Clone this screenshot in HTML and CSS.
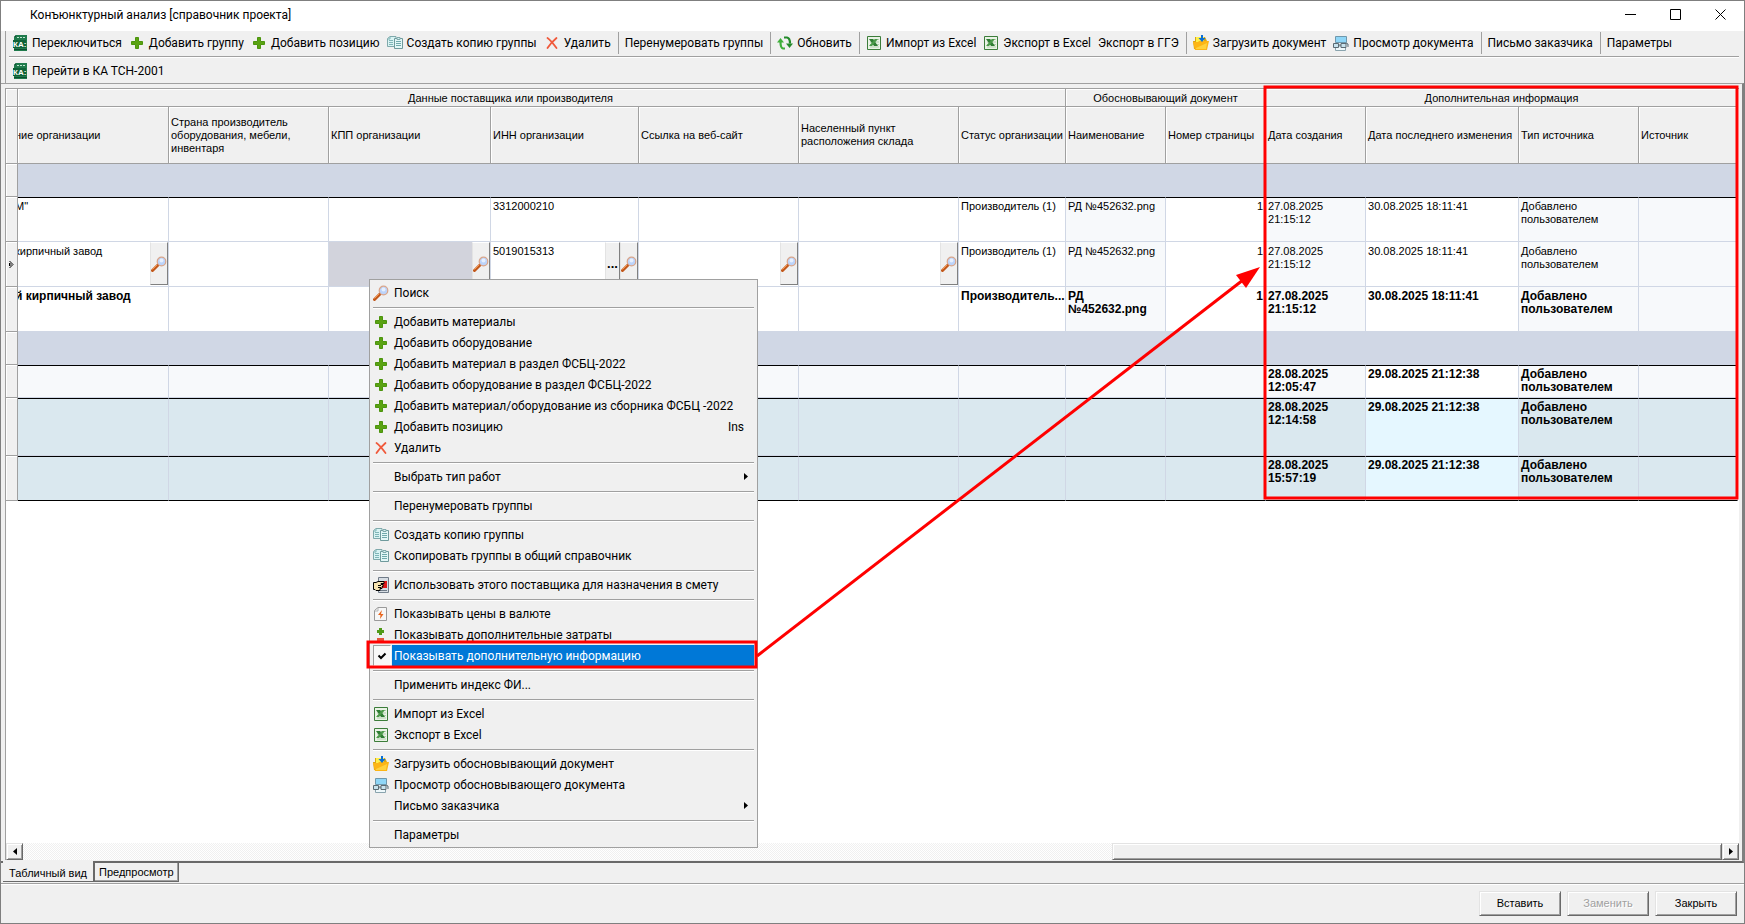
FILE: index.html
```html
<!DOCTYPE html>
<html lang="ru">
<head>
<meta charset="utf-8">
<title>Конъюнктурный анализ [справочник проекта]</title>
<link rel="stylesheet" href="styles.css">
</head>
<body>
<svg class="sprite" aria-hidden="true">
  <symbol id="ka" viewBox="0 0 16 16">
    <path d="M4 0h11v16H2V2z" fill="#1f7a4c"/><path d="M4 0v2H2z" fill="#0d4f30"/>
    <path d="M5 2.500h2m1 0h2m1 0h2" stroke="#bfe6cf"/><path d="M1 5h13v8H1z" fill="#0f6238"/>
    <path d="M2 14.500h13" stroke="#0d4f30"/>
    <text x="1" y="12" font-family="Liberation Sans" font-size="8" font-weight="bold" fill="#fff">КА:</text>
  </symbol>
  <symbol id="plus" viewBox="0 0 16 16"><path d="M6.500 2.500h3v4h4v3h-4v4h-3v-4h-4v-3h4z" fill="#5aa312" stroke="#4c940e"/></symbol>
  <symbol id="copy" viewBox="0 0 16 16">
    <path d="M.5 3.500 3 1.500h6v10H.5z" fill="#d9f3f3" stroke="#7fa9ab"/><path d="M2 5.500h4m-4 2h4m-4 2h4M3 2v2H1" stroke="#7fb5b7" fill="none"/>
    <path d="M7.500 3.500h8v10h-8z" fill="#e3f7f7" stroke="#6f9a9c"/><path d="M9 6.500h5m-5 2h5m-5 2h5" stroke="#6fa9ab"/><path d="M10 2.500h3v2h-3z" fill="#d9f3f3" stroke="#7fa9ab"/>
  </symbol>
  <symbol id="del" viewBox="0 0 16 16"><path d="M3.500 3c3 2 6 6 9 10M12.500 3C9 6 6 9 3.500 13" fill="none" stroke="#f0593b" stroke-width="1.800" stroke-linecap="round"/></symbol>
  <symbol id="refresh" viewBox="0 0 16 16">
    <path d="M8 13.500H6Q3.500 13 3.500 7" fill="none" stroke="#3fae3a" stroke-width="2.200"/><path d="M0 7.500 3.500 3 7 7.500z" fill="#3fae3a"/>
    <path d="M7 2.500h3q3 .5 3 6" fill="none" stroke="#238a2a" stroke-width="2.200"/><path d="M9 8.500h7L12.500 13z" fill="#238a2a"/>
  </symbol>
  <symbol id="excel" viewBox="0 0 16 16">
    <path d="M1.500 1.500h13v13h-13z" fill="#eaf3e6" stroke="#3c7d3a"/><path d="M4 4.500h9M4 7h9m-9 2.500h9M4 12h9" stroke="#b3cfae"/>
    <path d="M3 4h4l5 7H8z" fill="#2e7d32"/><path d="M12 4H9l-6 7h3z" fill="#4c9a4a"/>
  </symbol>
  <symbol id="folder" viewBox="0 0 16 16">
    <path d="M0 6h2V2h10l2 4v8H1z" fill="#d9a514"/><path d="M3 2h8v5H3z" fill="#fff04a"/>
    <path d="M0 7h5l1-1h10l-2 9H2z" fill="#fdb515"/><path d="M3 13 14 8l-1 6H3z" fill="#ffd23c"/>
    <path d="M8 0h2v3h2.500L9 7 5.500 3H8z" fill="#0b6fd6"/>
  </symbol>
  <symbol id="view" viewBox="0 0 16 16">
    <path d="M2.500 1.500h11v6h-11z" fill="#8fd6f7" stroke="#6f98ac"/><path d="M2.500 11h10v4.500h-10z" fill="#eef8fb" stroke="#8aa4ae"/>
    <path d="M.5 8.500h5v4h-5zM8 8.500h5v4H8zM5.500 10H8m5-2 2 1v3" fill="#c8e3ee" stroke="#5c6b73"/>
  </symbol>
  <symbol id="search" viewBox="0 0 16 16">
    <path d="M7 9 1.500 14.500" stroke="#c2571a" stroke-width="3" stroke-linecap="round"/><path d="M6 9 1.500 13.500" stroke="#f59a52"/>
    <circle cx="10.500" cy="5.500" r="4.300" fill="#bcd3fa" stroke="#d9a58a" stroke-width="1.200"/><circle cx="10.500" cy="4.500" r="2" fill="#e6effe"/>
  </symbol>
  <symbol id="hand" viewBox="0 0 16 16">
    <path d="M5.500.5h10v15h-10z" fill="#d7dde3" stroke="#707b88"/><path d="M8 4h6v7H8z" fill="#e01818"/><path d="M7 13.500h7" stroke="#707b88"/>
    <path d="M.5 5.500H3l2-1h6v2H8v1h2v2H9v2H7v2H3l-1-1H.5z" fill="#f7e3b0" stroke="#000"/><path d="M5 8.500h3m-3 2h3" stroke="#000"/>
  </symbol>
  <symbol id="price" viewBox="0 0 16 16"><path d="M1.500 4.500 5 1.500h8.500v13h-12z" fill="#f7f7f7" stroke="#9a9a9a"/><path d="M5 2v3H2" fill="none" stroke="#b5b5b5"/><path d="M9 4 5 9h2.500L7 13l3.500-5H8z" fill="#e8641b"/></symbol>
  <symbol id="pm" viewBox="0 0 16 16"><path d="M6 1h3v2h2v3H9v2H6V6H4V3h2z" fill="#4f9a17"/><path d="M4 11h7v3H4z" fill="#e2553c"/></symbol>
</svg>

<div class="window">
  <header class="titlebar">
    <h1>Конъюнктурный анализ [справочник проекта]</h1>
    <div class="winctl">
      <button aria-label="Свернуть"><svg viewBox="0 0 11 11"><path d="M0 5.500h11"/></svg></button>
      <button aria-label="Развернуть"><svg viewBox="0 0 11 11"><path d="M.5.5h10v10H.5z"/></svg></button>
      <button aria-label="Закрыть окно"><svg viewBox="0 0 11 11"><path d="m.5.5 10 10m0-10-10 10"/></svg></button>
    </div>
  </header>

  <div class="toolbars">
    <div class="toolbar">
      <button><svg><use href="#ka"/></svg>Переключиться</button>
      <button><svg><use href="#plus"/></svg>Добавить группу</button>
      <button><svg><use href="#plus"/></svg>Добавить позицию</button>
      <button><svg><use href="#copy"/></svg>Создать копию группы</button>
      <button><svg><use href="#del"/></svg>Удалить</button>
      <i></i>
      <button>Перенумеровать группы</button>
      <i></i>
      <button><svg><use href="#refresh"/></svg>Обновить</button>
      <i></i>
      <button><svg><use href="#excel"/></svg>Импорт из Excel</button>
      <button><svg><use href="#excel"/></svg>Экспорт в Excel</button>
      <button>Экспорт в ГГЭ</button>
      <i></i>
      <button><svg><use href="#folder"/></svg>Загрузить документ</button>
      <button><svg><use href="#view"/></svg>Просмотр документа</button>
      <i></i>
      <button>Письмо заказчика</button>
      <i></i>
      <button>Параметры</button>
    </div>
    <div class="toolbar">
      <button><svg><use href="#ka"/></svg>Перейти в КА ТСН-2001</button>
    </div>
  </div>

  <main class="page">
    <div class="grid">
      <table>
        <colgroup><col class="w12"><col class="w151"><col class="w160"><col class="w162"><col class="w148"><col class="w160"><col class="w160"><col class="w107"><col class="w100"><col class="w100"><col class="w100"><col class="w153"><col class="w120"><col></colgroup>
        <thead>
          <tr class="bands"><th class="ind"></th><th colspan="7" class="supplier">Данные поставщика или производителя</th><th colspan="2">Обосновывающий документ</th><th colspan="4">Дополнительная информация</th></tr>
          <tr class="heads"><th class="ind"></th><th><span class="cut">ние организации</span></th><th>Страна производитель<br>оборудования, мебели,<br>инвентаря</th><th>КПП организации</th><th>ИНН организации</th><th>Ссылка на веб-сайт</th><th>Населенный пункт<br>расположения склада</th><th>Статус организации</th><th>Наименование</th><th>Номер страницы</th><th>Дата создания</th><th>Дата последнего изменения</th><th>Тип источника</th><th>Источник</th></tr>
        </thead>
        <tbody>
          <tr class="group"><td class="ind"></td><td colspan="13"></td></tr>
          <tr class="item ruled"><td class="ind"></td><td><span class="cut">М"</span></td><td></td><td></td><td>3312000210</td><td></td><td></td><td>Производитель (1)</td><td class="ro">РД №452632.png</td><td class="num">1</td><td class="ro">27.08.2025<br>21:15:12</td><td>30.08.2025 18:11:41</td><td class="ro">Добавлено<br>пользователем</td><td class="ro"></td></tr>
          <tr class="item"><td class="ind"><svg class="cursor" viewBox="0 0 6 9"><path d="M1.500 1 5 4.500 1.500 8M1.500 3v3L3 4.500z"/></svg></td>
            <td class="edit"><div><span class="cut">кирпичный завод</span><button aria-label="Поиск"><svg><use href="#search"/></svg></button></div></td><td></td>
            <td class="edit current"><div><span></span><button aria-label="Поиск"><svg><use href="#search"/></svg></button></div></td>
            <td class="edit"><div><span>5019015313</span><button class="dots" aria-label="Выбрать">...</button><button aria-label="Поиск"><svg><use href="#search"/></svg></button></div></td>
            <td class="edit"><div><span></span><button aria-label="Поиск"><svg><use href="#search"/></svg></button></div></td>
            <td class="edit"><div><span></span><button aria-label="Поиск"><svg><use href="#search"/></svg></button></div></td>
            <td>Производитель (1)</td><td class="ro">РД №452632.png</td><td class="num">1</td><td class="ro">27.08.2025<br>21:15:12</td><td>30.08.2025 18:11:41</td><td class="ro">Добавлено<br>пользователем</td><td class="ro"></td></tr>
          <tr class="item strong"><td class="ind"></td><td><span class="cut">й кирпичный завод</span></td><td></td><td></td><td></td><td></td><td></td><td>Производитель...</td><td class="ro">РД<br>№452632.png</td><td class="num">1</td><td class="ro">27.08.2025<br>21:15:12</td><td>30.08.2025 18:11:41</td><td class="ro">Добавлено<br>пользователем</td><td class="ro"></td></tr>
          <tr class="group"><td class="ind"></td><td colspan="13"></td></tr>
          <tr class="short ruled strong locked"><td class="ind"></td><td></td><td></td><td></td><td></td><td></td><td></td><td></td><td></td><td></td><td>28.08.2025<br>12:05:47</td><td class="changed">29.08.2025 21:12:38</td><td>Добавлено<br>пользователем</td><td></td></tr>
          <tr class="tall ruled strong blue"><td class="ind"></td><td></td><td></td><td></td><td></td><td></td><td></td><td></td><td></td><td></td><td>28.08.2025<br>12:14:58</td><td class="changed">29.08.2025 21:12:38</td><td>Добавлено<br>пользователем</td><td></td></tr>
          <tr class="item ruled strong blue last"><td class="ind"></td><td></td><td></td><td></td><td></td><td></td><td></td><td></td><td></td><td></td><td>28.08.2025<br>15:57:19</td><td class="changed">29.08.2025 21:12:38</td><td>Добавлено<br>пользователем</td><td></td></tr>
        </tbody>
      </table>
      <div class="hscroll">
        <button aria-label="Влево"><svg viewBox="0 0 4 7"><path d="M4 0v7L0 3.500z"/></svg></button>
        <span class="thumb"></span>
        <button aria-label="Вправо"><svg viewBox="0 0 4 7"><path d="M0 0v7l4-3.500z"/></svg></button>
      </div>
    </div>
  </main>
  <nav class="tabs"><button class="on">Табличный вид</button><button>Предпросмотр</button></nav>
  <footer class="actions"><button>Вставить</button><button disabled>Заменить</button><button>Закрыть</button></footer>

  <div class="menu">
    <button><svg><use href="#search"/></svg>Поиск</button>
    <hr>
    <button><svg><use href="#plus"/></svg>Добавить материалы</button>
    <button><svg><use href="#plus"/></svg>Добавить оборудование</button>
    <button><svg><use href="#plus"/></svg>Добавить материал в раздел ФСБЦ-2022</button>
    <button><svg><use href="#plus"/></svg>Добавить оборудование в раздел ФСБЦ-2022</button>
    <button><svg><use href="#plus"/></svg>Добавить материал/оборудование из сборника ФСБЦ -2022</button>
    <button><svg><use href="#plus"/></svg>Добавить позицию<kbd>Ins</kbd></button>
    <button><svg><use href="#del"/></svg>Удалить</button>
    <hr>
    <button><svg></svg>Выбрать тип работ<svg class="sub" viewBox="0 0 4 7"><path d="M0 0v7l4-3.500z"/></svg></button>
    <hr>
    <button><svg></svg>Перенумеровать группы</button>
    <hr>
    <button><svg><use href="#copy"/></svg>Создать копию группы</button>
    <button><svg><use href="#copy"/></svg>Скопировать группы в общий справочник</button>
    <hr>
    <button><svg><use href="#hand"/></svg>Использовать этого поставщика для назначения в смету</button>
    <hr>
    <button><svg><use href="#price"/></svg>Показывать цены в валюте</button>
    <button><svg><use href="#pm"/></svg>Показывать дополнительные затраты</button>
    <button class="checked"><svg viewBox="0 0 16 16"><path d="m4.500 8 2.500 2.500 4.500-4.500" fill="none" stroke="#000" stroke-width="2"/></svg><span>Показывать дополнительную информацию</span></button>
    <hr>
    <button><svg></svg>Применить индекс ФИ...</button>
    <hr>
    <button><svg><use href="#excel"/></svg>Импорт из Excel</button>
    <button><svg><use href="#excel"/></svg>Экспорт в Excel</button>
    <hr>
    <button><svg><use href="#folder"/></svg>Загрузить обосновывающий документ</button>
    <button><svg><use href="#view"/></svg>Просмотр обосновывающего документа</button>
    <button><svg></svg>Письмо заказчика<svg class="sub" viewBox="0 0 4 7"><path d="M0 0v7l4-3.500z"/></svg></button>
    <hr>
    <button><svg></svg>Параметры</button>
  </div>

  <svg class="marks" width="1745" height="924" viewBox="0 0 1745 924" aria-hidden="true">
    <rect x="1265" y="87" width="472" height="411"/>
    <rect x="368" y="642" width="388" height="25"/>
    <path d="M757 656 1243 280"/>
    <path class="tip" d="M1260 267 1236 275 1246 288z"/>
  </svg>
</div>
</body>
</html>
```

FILE: styles.css
```css
* { box-sizing: border-box; }

body {
  margin: 0;
  background: #f0f0f0;
  color: #000;
  font: 11px/13px "Liberation Sans", Arial, sans-serif;
}

button {
  margin: 0;
  padding: 0;
  border: 0;
  background: none;
  color: inherit;
  font: inherit;
  white-space: nowrap;
}

svg { flex: none; display: block; width: 16px; height: 16px; }
.sprite { position: absolute; width: 0; height: 0; }

.window {
  position: relative;
  display: flex;
  flex-direction: column;
  min-height: 100vh;
  border: 1px solid #7f7f7f;
}

.titlebar, .toolbar, .menu { font: 12px/16px Roboto, "Open Sans", sans-serif; }

/* Title bar */
.titlebar {
  display: flex;
  align-items: center;
  justify-content: space-between;
  height: 30px;
  padding: 0 1px 3px 29px;
  background: #fff;
}
.titlebar h1 { margin: 0; font: inherit; }
.winctl { display: flex; }
.winctl button { display: flex; justify-content: center; width: 45px; }
.winctl svg { width: 11px; height: 11px; fill: none; stroke: #000; }

/* Toolbars */
.toolbars {
  margin: 0 5px 0 4px;
  border-left: 1px solid #a0a0a0;
  padding-left: 3px;
}
.toolbar { display: flex; align-items: center; height: 25px; padding-bottom: 2px; }
.toolbar + .toolbar { height: 27px; padding: 2px 0 0; border-top: 1px solid #a0a0a0; box-shadow: inset 0 1px #fff; }
.toolbar button { display: flex; flex: none; align-items: center; gap: 4px; padding: 0 4px 0 3px; }
.toolbar i { flex: none; width: 1px; height: 22px; margin: 0 3px; background: #a0a0a0; }

/* Tab page with the grid */
.page {
  flex: 1;
  display: flex;
  border-top: 1px solid #a0a0a0;
  padding: 4px 3px 1px 4px;
  border-right: 2px solid #808080;
  border-bottom: 2px solid #696969;
}
.grid {
  flex: 1;
  min-width: 0;
  display: flex;
  flex-direction: column;
  justify-content: space-between;
  border-top: 1px solid #a0a0a0;
  border-left: 1px solid #a0a0a0;
  background: #fff;
}
table { width: calc(100% - 1px); table-layout: fixed; border-collapse: separate; border-spacing: 0; }
.w12 { width: 12px; }
.w100 { width: 100px; }
.w107 { width: 107px; }
.w120 { width: 120px; }
.w148 { width: 148px; }
.w151 { width: 151px; }
.w153 { width: 153px; }
.w160 { width: 160px; }
.w162 { width: 162px; }

th, td { overflow: hidden; white-space: nowrap; text-align: left; }
th, .ind {
  border-right: 1px solid #a0a0a0;
  border-bottom: 1px solid #a0a0a0;
  background: #f0f0f0;
  box-shadow: inset 1px 1px #fff;
}
th { padding: 0 2px; font-weight: normal; vertical-align: middle; }
.bands th { height: 18px; padding-top: 2px; text-align: center; }
.bands .supplier { padding-right: 64px; }
.heads th { height: 57px; }
.cut { display: inline-block; margin-left: -5px; }

td {
  padding: 3px 2px 0;
  border-right: 1px solid #d0d7e5;
  border-bottom: 1px solid #d0d7e5;
  vertical-align: top;
}
.group td { height: 33px; }
.group td:not(.ind) { background: #d0d7e5; }
.item td { height: 45px; }
.short td { height: 33px; }
.tall td { height: 58px; }
.ruled td:not(.ind) { padding-top: 2px; border-top: 1px solid #000; }
.last td:not(.ind) { border-bottom-color: #000; }
.strong { font-size: 12px; font-weight: bold; }
.ro, .locked td:not(.ind) { background: #f7f9fb; }
.locked td.changed { background: #fff; }
.blue td:not(.ind) { background: #dae8ef; }
.blue td.changed { background: #e5f7ff; }
.num { text-align: right; }
td.ind { padding: 0; vertical-align: middle; }
.cursor { width: 6px; height: 9px; margin-left: 2px; fill: none; stroke: #000; }

td.edit { padding: 0; }
.edit div { display: flex; height: 44px; }
.edit span { flex: 1; padding: 3px 2px 0; }
.edit button {
  display: flex;
  align-items: center;
  justify-content: center;
  width: 18px;
  height: 43px;
  border: 1px solid;
  border-color: #fff #808080 #808080 #e3e3e3;
  background: #f0f0f0;
}
.edit .dots { width: 15px; font-size: 13px; font-weight: bold; }
.current { background: #d2d3dc; }

/* Scroll bar */
.hscroll {
  display: flex;
  justify-content: space-between;
  height: 17px;
  background: repeating-conic-gradient(#f0f0f0 0 25%, #fff 0 50%) 0 0 / 2px 2px;
}
.hscroll button, .thumb, .actions button {
  border: 1px solid;
  border-color: #e3e3e3 #696969 #696969 #e3e3e3;
  background: #f0f0f0;
  box-shadow: inset 1px 1px #fff, inset -1px -1px #a0a0a0;
}
.hscroll button { display: flex; align-items: center; justify-content: center; width: 17px; }
.hscroll svg { width: 4px; height: 7px; }
.thumb { width: 35.2%; margin-left: auto; }

/* Bottom tabs and buttons */
.tabs { display: flex; align-items: flex-start; height: 21px; padding-left: 2px; border-bottom: 1px solid #a0a0a0; }
.tabs button {
  height: 19px;
  padding: 0 4px;
  border: 1px solid #696969;
  border-top: 0;
  box-shadow: inset -1px -1px #a0a0a0;
}
.tabs .on { height: 21px; margin-top: -2px; padding: 5px 6px 0; border-left: 0; background: #f0f0f0; box-shadow: none; }
.actions {
  display: flex;
  justify-content: flex-end;
  gap: 6px;
  height: 39px;
  padding: 6px 7px 0 0;
  border-top: 1px solid #fff;
}
.actions button { width: 82px; height: 25px; }
.actions button:disabled { color: #a0a0a0; text-shadow: 1px 1px #fff; }

/* Context menu */
.menu {
  position: absolute;
  top: 278px;
  left: 368px;
  width: 389px;
  padding: 2px 3px;
  border: 1px solid #a0a0a0;
  background: #f0f0f0;
}
.menu button { display: flex; align-items: center; gap: 5px; width: 100%; height: 21px; text-align: left; }
.menu hr { height: 2px; margin: 4px 0 2px; border: 0; border-top: 1px solid #a0a0a0; background: #fff; }
.menu kbd { margin-left: auto; padding-right: 10px; font: inherit; }
.menu .sub { width: 4px; height: 7px; margin: 0 6px 0 auto; }
.menu .checked { gap: 1px; color: #fff; }
.checked svg { width: 18px; height: 21px; border: 1px solid; border-color: #a0a0a0 #fff #fff #a0a0a0; background: #f8f8f8; }
.checked span { flex: 1; height: 21px; padding: 3px 0 0 2px; background: #0078d7; }

/* Highlight frames and arrow */
.marks { position: absolute; top: -1px; left: -1px; width: 1745px; height: 924px; fill: none; stroke: #f00; stroke-width: 3; pointer-events: none; }
.marks .tip { fill: #f00; stroke: none; }
```
